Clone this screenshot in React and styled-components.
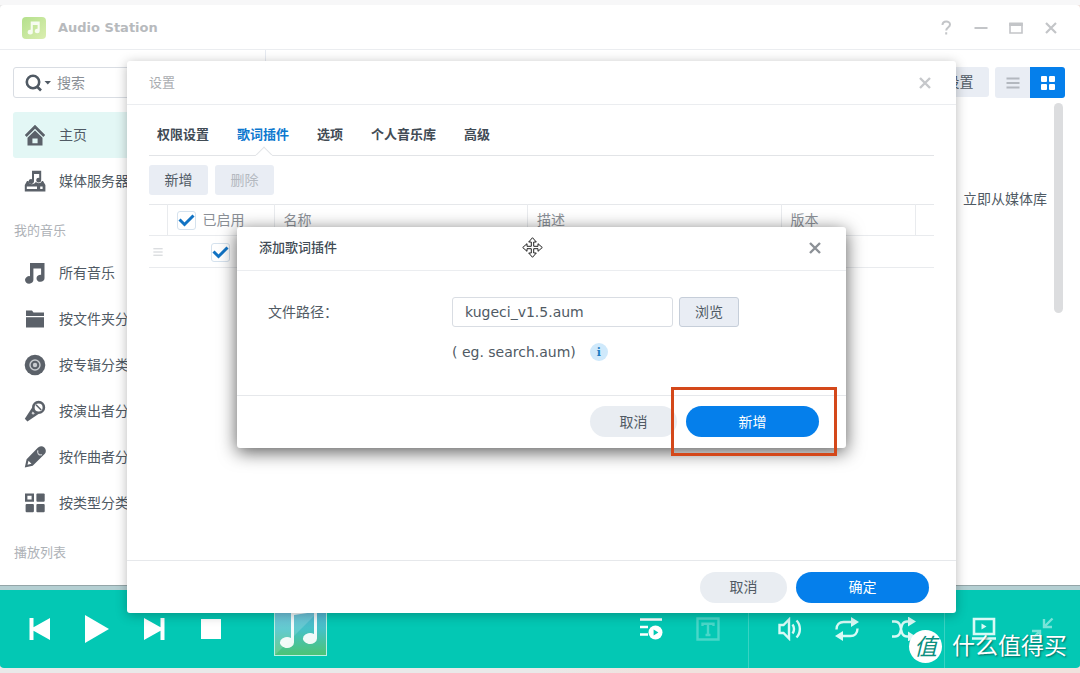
import React, { useState } from "react";
import styled, { createGlobalStyle, css } from "styled-components";

const GlobalStyle = createGlobalStyle`
    * {
        box-sizing: border-box;
    }

    body {
        margin: 0;
        font-family: "DejaVu Sans", "Noto Sans CJK SC", sans-serif;
        font-size: 14px;
        line-height: 20px;
        color: #505a64;
        background: linear-gradient(90deg, #e9e9e9 50%, #f0e2de 60%);
    }

    button,
    input {
        font: inherit;
        color: inherit;
    }

    button {
        padding: 0;
        border: 0;
        background: none;
        cursor: pointer;
    }

    ul {
        margin: 0;
        padding: 0;
        list-style: none;
    }

    svg {
        display: block;
        flex: none;
    }
`;

/* window */
const Desktop = styled.div`
    position: relative;
    height: 100vh;
    min-height: 600px;
    padding: 5px 0;
    display: flex;
    flex-direction: column;
    overflow: hidden;

    &::before {
        content: "";
        position: absolute;
        top: 0;
        left: 0;
        right: 0;
        height: 5px;
        background: #f7f7f8;
    }
`;

const AppWindow = styled.main`
    flex: 1;
    min-height: 0;
    display: flex;
    flex-direction: column;
    background-color: #fff;
    border-radius: 4px;
    overflow: hidden;
`;

const TitleBar = styled.header`
    height: 45px;
    flex: none;
    padding: 2px 19px 0 22px;
    display: flex;
    align-items: center;
    gap: 12px;
    border-bottom: 1px solid #ebedf0;

    h1 {
        margin: 0;
        flex: 1;
        font-size: 13px;
        color: #b7babd;
    }
`;

const WindowTools = styled.div`
    display: flex;
    gap: 15px;
    color: #c3c5c8;
`;

const WindowBody = styled.div`
    flex: 1;
    min-height: 0;
    display: flex;
`;

const Sidebar = styled.aside`
    width: 266px;
    flex: none;
    padding: 17px 13px 0;
    border-right: 1px solid #e6eaf1;
    overflow: hidden;
`;

const SearchBox = styled.label`
    height: 31px;
    margin-bottom: 14px;
    padding: 0 10px;
    display: flex;
    align-items: center;
    gap: 4px;
    border: 1px solid #d9dde3;
    border-radius: 3px;

    input {
        flex: 1;
        min-width: 0;
        padding: 0;
        border: 0;
        outline: 0;
    }

    input::placeholder {
        color: #8a8f96;
        opacity: 1;
    }
`;

const NavItem = styled.button`
    width: 100%;
    height: 46px;
    padding: 0 11px;
    display: flex;
    align-items: center;
    gap: 13px;
    border-radius: 3px;
    text-align: left;
    background-color: ${(props) => (props.$active ? "#e3f7f5" : "transparent")};

    svg {
        color: #5b6169;
    }
`;

const NavLabel = styled.h2`
    margin: 0;
    padding: 17px 0 9px 1px;
    font-size: 13px;
    font-weight: 400;
    color: #aeb2b7;
`;

const Content = styled.section`
    flex: 1;
    min-width: 0;
    padding: 17px 15px 0;
`;

const Toolbar = styled.div`
    display: flex;
    justify-content: flex-end;
    gap: 6px;
`;

const ViewSwitch = styled.div`
    display: flex;
    border-radius: 3px;
    overflow: hidden;
`;

const ViewButton = styled.button`
    width: 35px;
    height: 31px;
    display: grid;
    place-items: center;
    color: ${(props) => (props.$active ? "#fff" : "#b3b8bf")};
    background-color: ${(props) => (props.$active ? "#057feb" : "#e9edf4")};
`;

const ContentScroll = styled.div`
    padding-top: 5px;
    display: flex;
    justify-content: flex-end;
    gap: 7px;

    p {
        margin: 86px 0 0;
        white-space: nowrap;
    }
`;

const ScrollThumb = styled.div`
    width: 9px;
    height: 210px;
    margin-right: 2px;
    border-radius: 5px;
    background-color: #dcdddf;
`;

/* player */
const Player = styled.footer`
    height: 82px;
    flex: none;
    display: flex;
    align-items: center;
    color: #fff;
    background-color: #03c8b4;
    border-top: 4px solid #b4cfd2;
    box-shadow: 0 -1px 0 #94a5a8;
`;

const PlayerGroup = styled.div`
    height: 100%;
    display: flex;
    align-items: center;
    gap: ${(props) => props.$gap}px;
    padding: ${(props) => props.$pad};
    margin-right: ${(props) => (props.$push ? "auto" : 0)};
    border-left: ${(props) => (props.$line ? "1px solid #38d3c3" : "0")};
    color: ${(props) => (props.$soft ? "#d9faf6" : "#fff")};
`;

const Cover = styled.div`
    width: 53px;
    height: 53px;
    margin-left: 18px;
    border: 1px solid #b9f0e4;
`;

/* shared controls */
const Button = styled.button`
    min-width: 59px;
    height: 30px;
    padding: 0 15px;
    border-radius: 3px;
    background-color: #e9edf4;

    &:disabled {
        color: #b4b9c0;
        cursor: default;
    }

    ${(props) =>
        props.$outlined &&
        css`
            border: 1px solid #c6ced9;
        `}
`;

const PillButton = styled.button`
    width: ${(props) => (props.$primary ? 133 : 87)}px;
    height: 31px;
    border-radius: 16px;
    color: ${(props) => (props.$primary ? "#fff" : "#505a64")};
    background-color: ${(props) => (props.$primary ? "#057feb" : "#e9edf2")};
`;

const CheckBoxWrap = styled.span`
    position: relative;
    width: 19px;
    height: 19px;
    display: inline-block;
    vertical-align: middle;

    input {
        width: 19px;
        height: 19px;
        margin: 0;
        display: block;
        appearance: none;
        border: 1px solid #d5e2ee;
        border-radius: 3px;
        background-color: #fff;
    }

    svg {
        position: absolute;
        inset: 0;
        pointer-events: none;
        display: none;
    }

    input:checked + svg {
        display: block;
    }
`;

/* dialogs */
const Overlay = styled.div`
    position: absolute;
    inset: 0;
    padding: 61px 124px 60px 127px;
    display: grid;
    place-items: center;
`;

const Dialog = styled.section`
    position: relative;
    width: 100%;
    height: 100%;
    display: flex;
    flex-direction: column;
    background-color: #fff;
    border-radius: 3px;
    box-shadow: 0 2px 12px rgba(0, 0, 0, 0.28);

    ${(props) =>
        props.$small &&
        css`
            max-width: 609px;
            height: auto;
            box-shadow: 0 4px 18px rgba(0, 0, 0, 0.65);
        `}
`;

const DialogHeader = styled.header`
    height: 44px;
    flex: none;
    padding: 0 24px 0 22px;
    display: flex;
    align-items: center;
    justify-content: space-between;
    border-bottom: 1px solid #ebedf0;
    color: ${(props) => (props.$muted ? "#c6c8cb" : "#8c9197")};

    h2 {
        margin: 0;
        font-size: 13px;
        font-weight: ${(props) => (props.$muted ? 400 : 500)};
        color: ${(props) => (props.$muted ? "#aaadb1" : "#414b55")};
    }
`;

const DialogBody = styled.div`
    flex: 1;
    padding: 0 22px;
`;

const DialogFooter = styled.footer`
    height: 53px;
    flex: none;
    padding: 0 27px;
    display: flex;
    align-items: center;
    justify-content: flex-end;
    gap: 9px;
    border-top: 1px solid #e6e8eb;
`;

const TabList = styled.div`
    height: 51px;
    padding: 10px 8px 0;
    display: flex;
    gap: 28px;
    border-bottom: 1px solid #e2e4e7;
`;

const Tab = styled.button`
    position: relative;
    font-size: 13px;
    font-weight: 700;
    color: ${(props) => (props.$active ? "#0d78cf" : "#414b55")};

    ${(props) =>
        props.$active &&
        css`
            &::after {
                content: "";
                position: absolute;
                left: calc(50% - 5px);
                bottom: -6px;
                width: 10px;
                height: 10px;
                transform: rotate(45deg);
                border: 1px solid #e2e4e7;
                border-right-color: transparent;
                border-bottom-color: transparent;
                background-color: #fff;
            }
        `}
`;

const Actions = styled.div`
    padding: 9px 0;
    display: flex;
    gap: 7px;
`;

const PluginTable = styled.table`
    width: 100%;
    table-layout: fixed;
    border-collapse: collapse;
    border-top: 1px solid #e6e8eb;

    tr {
        height: 32px;
        border-bottom: 1px solid #e9ebee;
    }

    thead tr {
        height: 31px;
    }

    th,
    td {
        padding: 0;
    }

    th {
        padding-left: 9px;
        font-weight: 400;
        text-align: left;
        color: #8a8f96;
        border-left: 1px solid #e9ebee;
    }

    th:first-child {
        border-left: 0;
    }

    th label {
        display: flex;
        align-items: center;
        gap: 7px;
    }

    td {
        text-align: center;
    }

    td:first-child {
        color: #cdd0d4;
    }

    td > svg {
        margin: 0 auto;
    }
`;

const Form = styled.div`
    padding: 26px 31px 33px;
    display: grid;
    grid-template-columns: 184px 1fr;
    row-gap: 15px;
    align-items: center;
`;

const FileRow = styled.div`
    display: flex;
    gap: 6px;
`;

const TextInput = styled.input`
    width: 221px;
    height: 30px;
    padding: 0 12px;
    border: 1px solid #d9dde3;
    border-radius: 3px;
    outline: 0;
`;

const Hint = styled.p`
    grid-column: 2;
    margin: 0;
    display: flex;
    align-items: center;
    gap: 14px;
`;

const InfoDot = styled.span`
    width: 18px;
    height: 18px;
    display: grid;
    place-items: center;
    border-radius: 50%;
    font-family: "DejaVu Serif", serif;
    font-size: 11px;
    font-weight: 700;
    color: #1c7bc0;
    background-color: #cfe9fb;
`;

const Highlighted = styled.span`
    position: relative;
    display: flex;

    &::after {
        content: "";
        position: absolute;
        inset: -19px -18px -19px -15px;
        border: 3px solid #d4481a;
        pointer-events: none;
    }
`;

const MoveCursor = styled.span`
    position: absolute;
    top: 10px;
    left: 285px;
    pointer-events: none;
`;

const Watermark = styled.div`
    position: absolute;
    right: 13px;
    bottom: 10px;
    display: flex;
    align-items: center;
    gap: 10px;
    font-size: 23px;
    line-height: 34px;
    color: #fff;
    text-shadow: 1px 1px 2px rgba(0, 0, 0, 0.5);

    i {
        width: 33px;
        height: 33px;
        border-radius: 50%;
        text-align: center;
        text-shadow: none;
        color: #0b8f7f;
        background-color: #fff;
    }
`;

/* icons */
const CloseIcon = ({ size = 14 }) => (
    <svg width={size} height={size} viewBox="0 0 14 14" stroke="currentColor" strokeWidth="2.4">
        <path d="M2 2l10 10M12 2L2 12" />
    </svg>
);

const CheckIcon = () => (
    <svg width="19" height="19" viewBox="0 0 19 19" fill="none" stroke="#1173c4" strokeWidth="3">
        <path d="M2.5 8.5l5 5L16.5 4.5" />
    </svg>
);

const LinesIcon = ({ size, width }) => (
    <svg width={size} height={size} viewBox="0 0 14 14" stroke="currentColor" strokeWidth={width}>
        <path d="M.5 2.5h13M.5 7h13M.5 11.5h13" />
    </svg>
);

const GridIcon = () => (
    <svg width="14" height="14" viewBox="0 0 14 14" fill="currentColor">
        <rect width="6" height="6" rx="1" />
        <rect x="8" width="6" height="6" rx="1" />
        <rect y="8" width="6" height="6" rx="1" />
        <rect x="8" y="8" width="6" height="6" rx="1" />
    </svg>
);

const navIcons = {
    home: (
        <>
            <path d="M11 .8L.8 11l1.900 1.900L11 4.800l8.300 8.100L21.200 11z" />
            <path fillRule="evenodd" d="M11 6.500l7.500 7.300V21.500h-15v-7.700zM8.400 14.400v4.800h5.200v-4.800z" />
        </>
    ),
    server: (
        <>
            <path d="M8 .8h9.200v9.400a2.500 2.300 0 1 1-2-2.300V4H10v7.600a2.700 2.400 0 1 1-2-2.400z" />
            <path fillRule="evenodd" d="M3 11h1.500c.3 4.200 6 4.200 7.400.8 1.600 2.200 5 1.800 6-.8H19l2.400 4v6.500H.8V15zm-.2 5.400v2.600H13v-2.600zm13.400 0v2.600h2.400v-2.600z" />
        </>
    ),
    music: <path d="M6 1h14.5v15.200a4 3.600 0 1 1-3.400-3.500V6.500H9.400v11.200A4.200 3.800 0 1 1 6 14.200z" />,
    folder: (
        <>
            <path d="M2 2.500h6l1.500 2H20V8H2z" />
            <path d="M2 9.200h18v10.300H2z" />
        </>
    ),
    disc: (
        <>
            <circle cx="11" cy="11" r="10.3" />
            <circle cx="11" cy="11" r="5" fill="none" stroke="#c9ccd0" strokeWidth="1.4" />
            <circle cx="11" cy="11" r="2.2" fill="#c9ccd0" />
        </>
    ),
    mic: (
        <>
            <path d="M8.200 7.500L.8 18.800l2.600 2.700L14.500 14z" />
            <path d="M8.800 11.500l2 2-1.800 1.300-1.500-1.500z" fill="#fff" opacity=".75" />
            <circle cx="14.600" cy="7.400" r="5.300" fill="#fff" stroke="currentColor" strokeWidth="2.600" />
            <path d="M12 4.800l5.200 5.200" stroke="currentColor" strokeWidth="1.500" />
        </>
    ),
    pen: (
        <>
            <path fillRule="evenodd" d="M13.800 1.700a4.500 4.500 0 0 1 6.800 6.300L8.700 19.700.8 21.500l1.800-8.200zM4.500 14.800l-1 4 4-1z" />
            <path d="M14 4.300a3 3 0 0 0 4 4.200" fill="none" stroke="#c9ccd0" strokeWidth="1.300" />
        </>
    ),
    tiles: (
        <>
            <path fillRule="evenodd" d="M1 1.500h9v8.300H1zm2.400 2.300v3.800h4.200V3.800z" />
            <rect x="12.4" y="1.5" width="8.3" height="8.3" rx="1" />
            <rect x="1.6" y="12" width="8.3" height="8.3" rx="1" />
            <rect x="12.4" y="12" width="8.3" height="8.3" rx="1" />
        </>
    ),
};

const NavIcon = ({ name }) => (
    <svg width="22" height="22" viewBox="0 0 22 22" fill="currentColor">
        {navIcons[name]}
    </svg>
);

const solidIcons = {
    prev: <path d="M1.5 1h4v9.2L22 1v22L5.500 13.800V23h-4z" />,
    play: <path d="M0 -2L24 12 0 26z" />,
    next: <path d="M22.500 1h-4v9.200L2 1v22l16.500-9.200V23h4z" />,
    stop: <path d="M2 2h20v20H2z" />,
};

const lineIcons = {
    queue: (
        <>
            <path d="M1 2.500h22M1 10h8M1 17.500h8" strokeWidth="2.600" />
            <circle cx="16.500" cy="15.500" r="7" fill="currentColor" stroke="none" />
            <path d="M14.600 12.500v6l4.800-3z" fill="#03c8b4" stroke="none" />
        </>
    ),
    lyrics: <path d="M1.500 1.500h21v21h-21zM6.500 9V6.800h11V9M12 7v11M9.500 18h5" opacity=".28" />,
    volume: (
        <path d="M1.500 8h4l5.500-5.500v19L5.500 16h-4zM14.500 7.500c2 2.500 2 6.500 0 9M18.500 3.500c4.500 4.500 4.500 12.500 0 17" />
    ),
    repeat: (
        <>
            <path d="M1.500 12.500c0-5 3-7.500 7-7.500h9M22.500 11.500c0 5-3 7.500-7 7.500h-9" />
            <path d="M16 0l8 5-8 5zM8 14l-8 5 8 5z" fill="currentColor" stroke="none" />
        </>
    ),
    shuffle: (
        <>
            <path d="M0 4.500h3c9 0 3 15 12 15h3M0 19.500h3c9 0 3-15 12-15h3" />
            <path d="M16 -.5l8 5-8 5zM16 14.500l8 5-8 5z" fill="currentColor" stroke="none" />
        </>
    ),
    renderer: (
        <>
            <path d="M2 2h20v15H2zM0 21.500h24" strokeWidth="2.600" />
            <path d="M9.500 6.500v6l5-3z" fill="currentColor" stroke="none" />
        </>
    ),
    mini: <path d="M22.500 1.500l-8 8M14 2v8h8M1.500 22.500l8-8M2 14h8v8" opacity=".55" />,
};

const PlayerButton = ({ name, label }) => (
    <button type="button" aria-label={label}>
        {solidIcons[name] ? (
            <svg width="24" height="24" viewBox="0 0 24 24" fill="currentColor" overflow="visible">
                {solidIcons[name]}
            </svg>
        ) : (
            <svg width="24" height="24" viewBox="0 0 24 24" fill="none" stroke="currentColor" strokeWidth="2.4">
                {lineIcons[name]}
            </svg>
        )}
    </button>
);

function CheckBox({ ...props }) {
    return (
        <CheckBoxWrap>
            <input type="checkbox" {...props} />
            <CheckIcon />
        </CheckBoxWrap>
    );
}

const library = [
    { icon: "home", title: "主页" },
    { icon: "server", title: "媒体服务器" },
];

const myMusic = [
    { icon: "music", title: "所有音乐" },
    { icon: "folder", title: "按文件夹分类" },
    { icon: "disc", title: "按专辑分类" },
    { icon: "mic", title: "按演出者分类" },
    { icon: "pen", title: "按作曲者分类" },
    { icon: "tiles", title: "按类型分类" },
];

const tabs = ["权限设置", "歌词插件", "选项", "个人音乐库", "高级"];

function App() {
    const [tab, setTab] = useState("歌词插件");
    const [page, setPage] = useState("主页");
    const [enabled, setEnabled] = useState(true);
    const [file, setFile] = useState("kugeci_v1.5.aum");

    const renderNav = (items) => (
        <ul>
            {items.map((item) => (
                <li key={item.title}>
                    <NavItem type="button" $active={page === item.title} onClick={() => setPage(item.title)}>
                        <NavIcon name={item.icon} />
                        {item.title}
                    </NavItem>
                </li>
            ))}
        </ul>
    );

    return (
        <>
            <GlobalStyle />
            <Desktop>
                <AppWindow>
                    <TitleBar>
                        <svg width="24" height="22" viewBox="0 0 24 22">
                            <defs>
                                <linearGradient id="logo" x1="0" y1="0" x2="1" y2="1">
                                    <stop offset="0" stopColor="#b4e08c" />
                                    <stop offset="1" stopColor="#dbeeb0" />
                                </linearGradient>
                            </defs>
                            <rect width="24" height="22" rx="4" fill="url(#logo)" />
                            <g transform="translate(5 4) scale(.62)" fill="#fff" opacity=".85">
                                {navIcons.music}
                            </g>
                        </svg>
                        <h1>Audio Station</h1>
                        <WindowTools>
                            <button type="button" aria-label="帮助">
                                <svg width="20" height="20" viewBox="0 0 20 20" fill="none" stroke="currentColor" strokeWidth="2">
                                    <path d="M6.500 7c0-4.500 7.500-4.500 7.500-.5 0 3-3.800 3-3.800 6M10.200 14.200v2.300" />
                                </svg>
                            </button>
                            <button type="button" aria-label="最小化">
                                <svg width="20" height="20" viewBox="0 0 20 20" stroke="currentColor" strokeWidth="2">
                                    <path d="M3.500 10h13" />
                                </svg>
                            </button>
                            <button type="button" aria-label="最大化">
                                <svg width="20" height="20" viewBox="0 0 20 20" fill="none" stroke="currentColor">
                                    <path d="M4 5v10h12V5" strokeWidth="1.600" />
                                    <path d="M3.200 6.200h13.600" strokeWidth="3.600" />
                                </svg>
                            </button>
                            <button type="button" aria-label="关闭">
                                <svg width="20" height="20" viewBox="0 0 20 20" stroke="currentColor" strokeWidth="2.200">
                                    <path d="M5 5l10 10M15 5L5 15" />
                                </svg>
                            </button>
                        </WindowTools>
                    </TitleBar>

                    <WindowBody>
                        <Sidebar>
                            <SearchBox>
                                <svg width="29" height="20" viewBox="0 0 29 20" fill="none" stroke="#505a64" strokeWidth="2.600">
                                    <circle cx="9" cy="9" r="6.200" />
                                    <path d="M13 13.500l4 4" />
                                    <path d="M20.500 8h6.500l-3.200 3.600z" fill="#505a64" stroke="none" />
                                </svg>
                                <input type="search" aria-label="搜索" placeholder="搜索" />
                            </SearchBox>
                            {renderNav(library)}
                            <NavLabel>我的音乐</NavLabel>
                            {renderNav(myMusic)}
                            <NavLabel>播放列表</NavLabel>
                        </Sidebar>

                        <Content>
                            <Toolbar>
                                <Button type="button">设置</Button>
                                <ViewSwitch>
                                    <ViewButton type="button" aria-label="列表">
                                        <LinesIcon size={14} width={2.2} />
                                    </ViewButton>
                                    <ViewButton type="button" aria-label="图标" $active>
                                        <GridIcon />
                                    </ViewButton>
                                </ViewSwitch>
                            </Toolbar>
                            <ContentScroll>
                                <p>立即从媒体库</p>
                                <ScrollThumb />
                            </ContentScroll>
                        </Content>
                    </WindowBody>

                    <Player>
                        <PlayerGroup $gap={33} $pad="0 0 0 28px" $push>
                            <PlayerButton name="prev" label="上一首" />
                            <PlayerButton name="play" label="播放" />
                            <PlayerButton name="next" label="下一首" />
                            <PlayerButton name="stop" label="停止" />
                            <Cover>
                                <svg width="51" height="51" viewBox="0 0 51 51">
                                    <defs>
                                        <linearGradient id="cover" x1="0" y1="0" x2="0" y2="1">
                                            <stop offset="0" stopColor="#5ab4dc" />
                                            <stop offset=".5" stopColor="#45c1c6" />
                                            <stop offset="1" stopColor="#4cc476" />
                                        </linearGradient>
                                    </defs>
                                    <path fill="url(#cover)" d="M0 0h51v51H0z" />
                                    <path fill="#fff" opacity=".16" d="M0 0h51L0 51z" />
                                    <path
                                        fill="#fff"
                                        opacity=".92"
                                        d="M16 4l26-4v34.500a7 5.500 0 1 1-3-4.500V8l-20 3v27.500a7 5.500 0 1 1-3-4.500z"
                                    />
                                </svg>
                            </Cover>
                        </PlayerGroup>
                        <PlayerGroup $gap={33} $pad="0 28px 0 0">
                            <PlayerButton name="queue" label="播放队列" />
                            <PlayerButton name="lyrics" label="歌词" />
                        </PlayerGroup>
                        <PlayerGroup $gap={33} $pad="0 28px 0 29px" $line $soft>
                            <PlayerButton name="volume" label="音量" />
                            <PlayerButton name="repeat" label="循环" />
                            <PlayerButton name="shuffle" label="随机" />
                        </PlayerGroup>
                        <PlayerGroup $gap={34} $pad="0 26px 0 27px" $line $soft>
                            <PlayerButton name="renderer" label="播放设备" />
                            <PlayerButton name="mini" label="迷你播放器" />
                        </PlayerGroup>
                    </Player>
                </AppWindow>

                <Overlay>
                    <Dialog role="dialog" aria-label="设置">
                        <DialogHeader $muted>
                            <h2>设置</h2>
                            <button type="button" aria-label="关闭">
                                <CloseIcon />
                            </button>
                        </DialogHeader>
                        <DialogBody>
                            <TabList role="tablist">
                                {tabs.map((name) => (
                                    <Tab
                                        key={name}
                                        type="button"
                                        role="tab"
                                        aria-selected={tab === name}
                                        $active={tab === name}
                                        onClick={() => setTab(name)}
                                    >
                                        {name}
                                    </Tab>
                                ))}
                            </TabList>
                            <Actions>
                                <Button type="button">新增</Button>
                                <Button type="button" disabled>
                                    删除
                                </Button>
                            </Actions>
                            <PluginTable>
                                <colgroup>
                                    <col width="18" />
                                    <col width="107" />
                                    <col />
                                    <col />
                                    <col width="134" />
                                    <col width="19" />
                                </colgroup>
                                <thead>
                                    <tr>
                                        <th />
                                        <th>
                                            <label>
                                                <CheckBox checked={enabled} onChange={(e) => setEnabled(e.target.checked)} />
                                                已启用
                                            </label>
                                        </th>
                                        <th>名称</th>
                                        <th>描述</th>
                                        <th>版本</th>
                                        <th />
                                    </tr>
                                </thead>
                                <tbody>
                                    <tr>
                                        <td>
                                            <LinesIcon size={10} width={1.4} />
                                        </td>
                                        <td>
                                            <CheckBox
                                                aria-label="已启用"
                                                checked={enabled}
                                                onChange={(e) => setEnabled(e.target.checked)}
                                            />
                                        </td>
                                        <td />
                                        <td />
                                        <td />
                                        <td />
                                    </tr>
                                </tbody>
                            </PluginTable>
                        </DialogBody>
                        <DialogFooter>
                            <PillButton type="button">取消</PillButton>
                            <PillButton type="button" $primary>
                                确定
                            </PillButton>
                        </DialogFooter>
                    </Dialog>
                </Overlay>

                <Overlay>
                    <Dialog $small role="dialog" aria-label="添加歌词插件">
                        <DialogHeader>
                            <h2>添加歌词插件</h2>
                            <button type="button" aria-label="关闭">
                                <CloseIcon />
                            </button>
                        </DialogHeader>
                        <Form>
                            <label htmlFor="file">文件路径：</label>
                            <FileRow>
                                <TextInput id="file" value={file} onChange={(e) => setFile(e.target.value)} />
                                <Button type="button" $outlined>
                                    浏览
                                </Button>
                            </FileRow>
                            <Hint>
                                ( eg. search.aum)
                                <InfoDot>i</InfoDot>
                            </Hint>
                        </Form>
                        <DialogFooter>
                            <PillButton type="button">取消</PillButton>
                            <Highlighted>
                                <PillButton type="button" $primary>
                                    新增
                                </PillButton>
                            </Highlighted>
                        </DialogFooter>
                        <MoveCursor>
                            <svg width="21" height="21" viewBox="0 0 21 21" fill="#fff" stroke="#222" strokeWidth="1">
                                <path d="M10.500.7l3.800 4.300h-2.600v4.300H16V6.700l4.300 3.800-4.300 3.800v-2.600h-4.300V16h2.600l-3.800 4.300L6.700 16h2.600v-4.300H5v2.600L.7 10.500 5 6.700v2.600h4.300V5H6.700z" />
                            </svg>
                        </MoveCursor>
                    </Dialog>
                </Overlay>

                <Watermark>
                    <i>值</i>
                    什么值得买
                </Watermark>
            </Desktop>
        </>
    );
}

export default App;
